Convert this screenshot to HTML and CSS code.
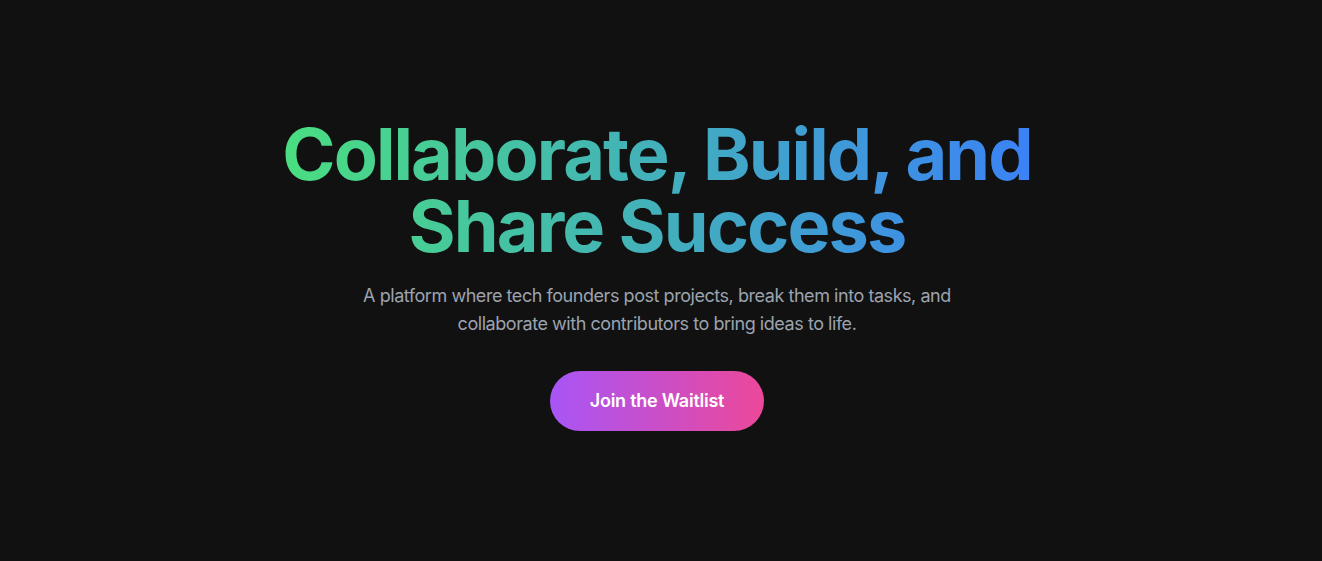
FILE: index.html
```html
<!DOCTYPE html>
<html lang="en">
<head>
<meta charset="utf-8">
<title>Collaborate, Build, and Share Success</title>
<link rel="stylesheet" href="styles.css">
</head>
<body>
<main class="hero">
  <h1 class="title">Collaborate, Build, and<br>Share Success</h1>
  <p class="lead">A platform where tech founders post projects, break them into tasks, and collaborate with contributors to bring ideas to life.</p>
  <a class="cta" href="#">Join the Waitlist</a>
</main>
</body>
</html>
```
FILE: styles.css
```css
html, body {
  margin: 0;
  padding: 0;
  background: #111111;
}
body {
  font-family: Inter, "Noto Sans", sans-serif;
  min-height: 561px;
}
.hero {
  min-height: 561px;
  box-sizing: border-box;
  display: flex;
  flex-direction: column;
  align-items: center;
  justify-content: center;
  text-align: center;
  padding: 0 8px 12px 0;
}
.title {
  display: inline-block;
  margin: 0 0 20px;
  font-size: 72px;
  line-height: 72px;
  font-weight: 700;
  letter-spacing: -1.9px;
  background: linear-gradient(to right, #4ade80, #3b82f6);
  -webkit-background-clip: text;
  background-clip: text;
  color: transparent;
}
.lead {
  margin: 0 0 33px;
  max-width: 640px;
  font-size: 18px;
  line-height: 28px;
  letter-spacing: -0.45px;
  color: #9ca3af;
}
.cta {
  display: inline-block;
  padding: 16px 40px;
  font-size: 18px;
  line-height: 28px;
  font-weight: 600;
  letter-spacing: -0.25px;
  color: #ffffff;
  text-decoration: none;
  border-radius: 9999px;
  background: linear-gradient(to right, #a855f7, #ec4899);
}
```
